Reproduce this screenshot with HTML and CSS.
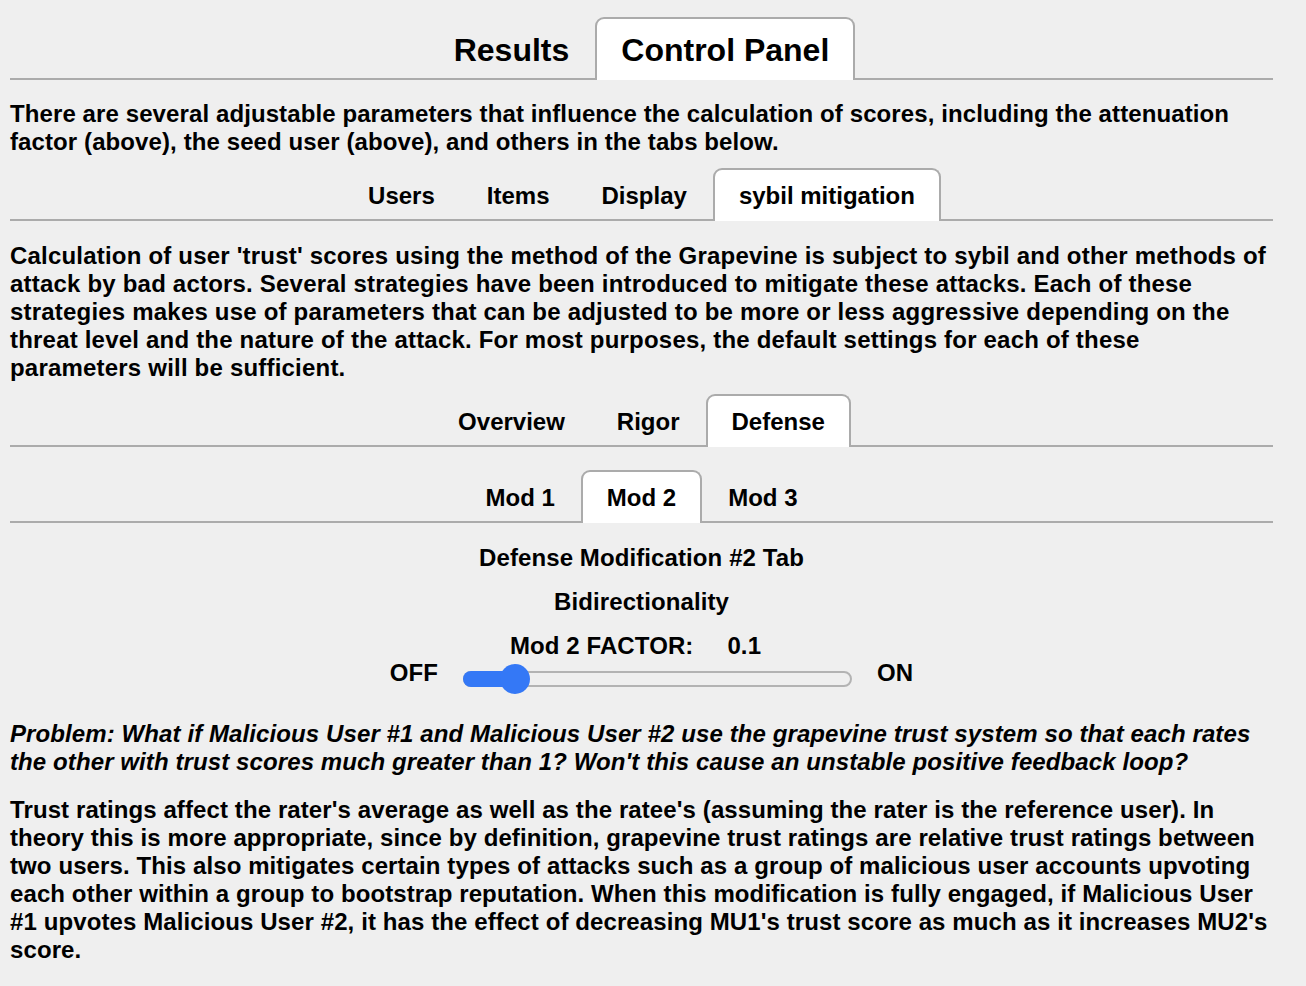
FILE: index.html
```html
<!DOCTYPE html>
<html>
<head>
<meta charset="utf-8">
<link rel="stylesheet" href="styles.css">
</head>
<body>
<div class="page">
  <div class="tabbar tabbar-main">
    <div class="tab">Results</div>
    <div class="tab active">Control Panel</div>
  </div>
  <p class="para p1">There are several adjustable parameters that influence the calculation of scores, including the attenuation factor (above), the seed user (above), and others in the tabs below.</p>
  <div class="tabbar tabbar-sub t2">
    <div class="tab">Users</div>
    <div class="tab">Items</div>
    <div class="tab">Display</div>
    <div class="tab active">sybil mitigation</div>
  </div>
  <p class="para p2">Calculation of user 'trust' scores using the method of the Grapevine is subject to sybil and other methods of attack by bad actors. Several strategies have been introduced to mitigate these attacks. Each of these strategies makes use of parameters that can be adjusted to be more or less aggressive depending on the threat level and the nature of the attack. For most purposes, the default settings for each of these parameters will be sufficient.</p>
  <div class="tabbar tabbar-sub t3">
    <div class="tab">Overview</div>
    <div class="tab">Rigor</div>
    <div class="tab active">Defense</div>
  </div>
  <div class="tabbar tabbar-sub t4">
    <div class="tab">Mod 1</div>
    <div class="tab active">Mod 2</div>
    <div class="tab">Mod 3</div>
  </div>
  <div class="center-line c1">Defense Modification #2 Tab</div>
  <div class="center-line c2">Bidirectionality</div>
  <div class="center-line c3">Mod 2 FACTOR:<span class="val">0.1</span></div>
  <div class="slider-row">
    <span class="lbl">OFF</span>
    <div class="slider">
      <div class="fill" style="width: 50px"></div>
      <div class="thumb" style="left: 35px"></div>
    </div>
    <span class="lbl">ON</span>
  </div>
  <p class="para italic">Problem: What if Malicious User #1 and Malicious User #2 use the grapevine trust system so that each rates the other with trust scores much greater than 1? Won't this cause an unstable positive feedback loop?</p>
  <p class="para p4">Trust ratings affect the rater's average as well as the ratee's (assuming the rater is the reference user). In theory this is more appropriate, since by definition, grapevine trust ratings are relative trust ratings between two users. This also mitigates certain types of attacks such as a group of malicious user accounts upvoting each other within a group to bootstrap reputation. When this modification is fully engaged, if Malicious User #1 upvotes Malicious User #2, it has the effect of decreasing MU1's trust score as much as it increases MU2's score.</p>
</div>
</body>
</html>
```

FILE: styles.css
```css
*, *::before, *::after {
  box-sizing: border-box;
}
html, body {
  margin: 0;
  padding: 0;
  background: #efefef;
}
body {
  font-family: "Liberation Sans", Arial, sans-serif;
  font-weight: bold;
  color: #000;
  font-size: 24px;
  line-height: 28px;
  letter-spacing: 0.1px;
}
.page {
  width: 1263px;
  margin-left: 10px;
  padding-top: 17px;
}
.tabbar {
  display: flex;
  justify-content: center;
  border-bottom: 2px solid #ababab;
}
.tab {
  padding: 0 24px;
  border: 2px solid transparent;
  border-bottom: none;
  border-radius: 9px 9px 0 0;
  display: flex;
  align-items: center;
  margin-bottom: -2px;
}
.tab.active {
  background: #fff;
  border-color: #ababab;
}
.tabbar-main .tab {
  height: 63px;
  font-size: 32px;
  letter-spacing: 0;
  padding-top: 3px;
  padding-bottom: 2px;
}
.tabbar-sub .tab {
  height: 53px;
  padding-top: 2px;
  padding-bottom: 2px;
  letter-spacing: 0;
}
.para {
  margin: 0;
}
.p1 { margin-top: 20px; }
.t2 { margin-top: 12px; }
.p2 { margin-top: 21px; letter-spacing: 0.2px; }
.t3 { margin-top: 12px; }
.t4 { margin-top: 23px; }
.center-line {
  text-align: center;
}
.c1 { margin-top: 21px; }
.c2 { margin-top: 16px; }
.c3 { margin-top: 16px; padding-right: 12px; }
.val { margin-left: 34px; }
.slider-row {
  display: flex;
  align-items: center;
  justify-content: center;
  gap: 25px;
  padding-left: 20px;
  height: 30px;
  margin-top: -1px;
}
.slider-row .lbl {
  position: relative;
  top: -1px;
}
.slider {
  position: relative;
  width: 389px;
  height: 16px;
  border: 2px solid #b3b3b3;
  border-radius: 9px;
  background: #efefef;
  margin-top: 10px;
}
.fill {
  position: absolute;
  left: -2px;
  top: -2px;
  height: 16px;
  background: #3478f6;
  border-radius: 9px 0 0 9px;
}
.thumb {
  position: absolute;
  top: -9px;
  width: 30px;
  height: 30px;
  border-radius: 50%;
  background: #3478f6;
}
.italic {
  font-style: italic;
  margin-top: 31px;
}
.p4 { margin-top: 20px; }
```
